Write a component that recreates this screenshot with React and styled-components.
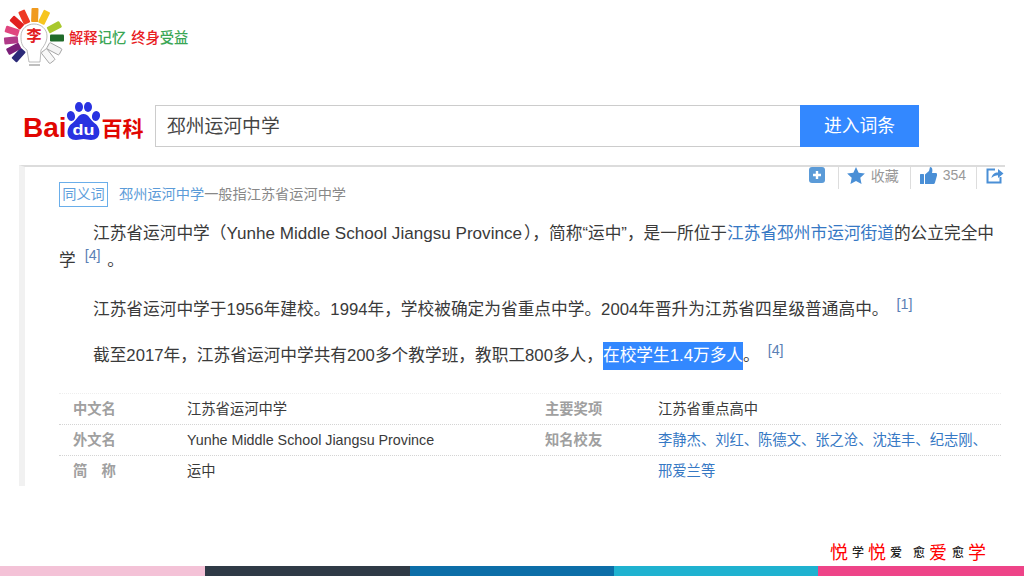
import React from "react";
import styled, { createGlobalStyle } from "styled-components";

const Global = createGlobalStyle`
  html, body { margin: 0; padding: 0; background: #fff; }
  body { font-family: "Liberation Sans", "Noto Sans CJK SC", sans-serif; }
`;
const Slide = styled.div`
  width: 1024px; height: 576px; display: flex; flex-direction: column; overflow: hidden; background: #fff;
`;
const Header = styled.header`
  height: 75px; padding: 4px 0 0 2px; box-sizing: border-box; display: flex; align-items: flex-start; gap: 1px; flex: none;
`;
const Motto = styled.div`
  margin-top: 24px; font-size: 14.3px; line-height: 20px; font-weight: 500; white-space: nowrap; word-spacing: 1px;
`;
const Tint = styled.span`
  color: ${p => p.$c};
`;
const SearchRow = styled.div`
  margin-top: 30px; height: 42px; display: flex; align-items: center; padding-left: 23px; flex: none;
`;
const Brand = styled.div`
  width: 132px; height: 42px; display: flex; align-items: flex-end; flex: none; color: #e10601;
`;
const BrandLatin = styled.span`
  font-size: 28px; font-weight: 700; line-height: 30px; margin-bottom: 4px;
`;
const Paw = styled.svg`
  width: 37px; height: 38px; margin-left: -2px; margin-bottom: 7px; flex: none;
`;
const BrandCjk = styled.span`
  font-size: 21px; font-weight: 700; line-height: 28px; margin-bottom: 4px;
`;
const SearchBox = styled.div`
  width: 645px; height: 42px; box-sizing: border-box; border: 1px solid #ccc; border-right: 0;
  font-size: 18.8px; color: #444; padding: 1px 0 0 11px; line-height: 40px; flex: none;
`;
const SearchButton = styled.button`
  width: 119px; height: 42px; border: 0; background: #3388ff; color: #fff; font: inherit; font-size: 17.8px; padding: 0 0 4px; flex: none;
`;
const Panel = styled.section`
  margin: 18px 0 0 19px; width: 986px; height: 321px; box-sizing: border-box; flex: none;
  border-top: 2px solid #dcdcdc; border-left: 6px solid #f1f1f1; padding-left: 34px; overflow: hidden;
`;
const TopRow = styled.div`
  display: flex; justify-content: space-between; align-items: flex-start; height: 44px;
`;
const Synonym = styled.div`
  margin-top: 15px; display: flex; align-items: center; font-size: 14.2px; line-height: 25px; color: #888;
`;
const SynBadge = styled.span`
  width: 49px; height: 25px; box-sizing: border-box; border: 1px solid #6aaeea; color: #5f9fdc; text-align: center; line-height: 23px; margin-right: 11px;
`;
const SynLink = styled.span`
  color: #5b9bd8;
`;
const Tools = styled.div`
  display: flex; align-items: center; height: 22px; color: #999; font-size: 14px;
`;
const ToolItem = styled.div`
  display: flex; align-items: center; gap: 6px; height: 22px; padding: 0 ${p => p.$r || 11}px 6px ${p => p.$l || 8}px; box-sizing: border-box;
  border-right: ${p => (p.$last ? "0" : "1px solid #ddd")};
`;
const Paragraph = styled.p`
  margin: ${p => p.$top}px 0 0; font-size: 16.7px; line-height: 27px; color: #3a3a3a; text-indent: 34px; white-space: nowrap;
`;
const Latin = styled.span`
  font-size: 17.1px; margin-right: 2px;
`;
const Ref = styled.sup`
  font-size: 14.3px; line-height: 0; color: #5b7fb5; vertical-align: 6px; margin: 0 ${p => p.$r}px 0 ${p => p.$l}px;
`;
const Link = styled.span`
  color: #3678c4;
`;
const Selected = styled.span`
  display: inline-block; background: #3388ff; color: #fff; text-indent: 0; line-height: 28px; height: 28px; width: 140px;
`;
const Table = styled.div`
  margin-top: 23px; border-top: 1px dotted #eee; font-size: 14.3px; width: 942px;
`;
const Row = styled.div`
  display: grid; grid-template-columns: 128px 358px 113px 1fr; height: 31px; line-height: 30px; white-space: nowrap;
  border-bottom: ${p => (p.$last ? "0" : "1px dotted #d4d4d4")}; box-sizing: border-box;
`;
const Label = styled.div`
  color: #a0a0a0; font-weight: 700; padding-left: ${p => p.$l || 0}px;
`;
const Value = styled.div`
  color: ${p => (p.$link ? "#3678c4" : "#3a3a3a")};
`;
const TagRow = styled.div`
  flex: 1; display: flex; justify-content: flex-end; align-items: flex-end; padding-right: 38px; line-height: 26px;
`;
const TagBig = styled.span`
  color: #f00; font-size: 18px; margin-right: ${p => p.$r ?? 4}px;
`;
const TagSmall = styled.span`
  color: #222; font-size: 12px; font-weight: 500; margin-right: ${p => p.$r ?? 4}px;
`;
const ColorBar = styled.div`
  height: 10px; display: grid; grid-template-columns: 205px 205px 204px 204px 206px; flex: none;
`;
const Swatch = styled.div`
  background: ${p => p.$c};
`;

const rays = [
  ["#2b2a78", 222], ["#7a1f78", 242], ["#b03a88", 264], ["#e0457f", 288], ["#e2201f", 312], ["#ee3a24", 335],
  ["#f09a1e", 2], ["#f6c51e", 26], ["#a8c82c", 62], ["#1f6b2a", 90], ["#f4f4f4", 118], ["#f8f8f8", 142],
];

const Logo = () => (
  <svg width="66" height="66" viewBox="0 0 66 66" aria-hidden="true">
    {rays.map(([c, a], i) => (
      <rect key={i} x="28.5" y="4" width="7" height="14" rx="1" fill={c} stroke={c === "#f4f4f4" || c === "#f8f8f8" ? "#999" : "none"}
        strokeWidth="0.8" transform={`rotate(${a} 32 34)`} />
    ))}
    <path d="M25 46 C19 42 19 37 19 32 C19 25 25 20 32 20 C39 20 45 25 45 32 C45 38 42 42 39 46 L38 58 L27 58 Z" fill="#fff" stroke="#aaa" strokeWidth="0.8" />
    <path d="M27 61 H38" stroke="#aaa" strokeWidth="1.5" />
    <text x="32" y="37" textAnchor="middle" fontSize="15" fontWeight="700" fill="#e2201f" fontFamily="Noto Sans CJK SC, sans-serif">李</text>
  </svg>
);

const PlusIcon = () => (
  <svg width="16" height="16" viewBox="0 0 16 16" aria-hidden="true">
    <rect width="16" height="16" rx="3" fill="#5b9bd8" />
    <path d="M8 4v8M4 8h8" stroke="#fff" strokeWidth="2.4" />
  </svg>
);
const StarIcon = () => (
  <svg width="18" height="17" viewBox="0 0 24 23" aria-hidden="true">
    <path d="M12 0l3.6 7.8 8.4 1-6.2 5.8 1.7 8.4L12 18.8 4.5 23l1.7-8.4L0 8.8l8.4-1z" fill="#4a8fd6" />
  </svg>
);
const ThumbIcon = () => (
  <svg width="17" height="17" viewBox="0 0 17 17" aria-hidden="true">
    <rect x="0" y="7" width="4" height="10" rx="0.5" fill="#4a8fd6" />
    <path d="M5 7.5 L9 4 L10 0 C12 0 13 2 12 6 H16 C17 6 17.3 7.5 17 8.5 L15 15.5 C14.7 16.5 14 17 13 17 H5 Z" fill="#4a8fd6" />
  </svg>
);
const ShareIcon = () => (
  <svg width="18" height="17" viewBox="0 0 18 17" fill="none" aria-hidden="true">
    <path d="M9 2.5H1.5V15.5H14.5V10" stroke="#4a8fd6" strokeWidth="2" />
    <path d="M5.5 11C6 7.5 8.5 5.5 12 5.5V2L17.5 6.5 12 11V8.2C9.5 8.2 7.5 9 5.5 11Z" fill="#4a8fd6" />
  </svg>
);

export default function App() {
  return (
    <Slide>
      <Global />
      <Header>
        <Logo />
        <Motto>
          <Tint $c="#e8201f">解释</Tint><Tint $c="#3aa655">记忆</Tint>{" "}
          <Tint $c="#e8201f">终身</Tint><Tint $c="#3aa655">受益</Tint>
        </Motto>
      </Header>
      <SearchRow>
        <Brand>
          <BrandLatin>Bai</BrandLatin>
          <Paw viewBox="0 0 37 38" aria-hidden="true">
            <ellipse cx="6" cy="14" rx="4" ry="5" fill="#2932e1" transform="rotate(-15 6 14)" />
            <ellipse cx="14" cy="5" rx="4" ry="5" fill="#2932e1" />
            <ellipse cx="23" cy="5" rx="4" ry="5" fill="#2932e1" />
            <ellipse cx="31" cy="14" rx="4" ry="5" fill="#2932e1" transform="rotate(15 31 14)" />
            <path d="M18.5 12C13 12 12 18 7 21.5 C1 25.5 0 38 11 38 C14 38 16 37 18.5 37 C21 37 23 38 26 38 C37 38 36 25.5 30 21.5 C25 18 24 12 18.5 12Z" fill="#2932e1" />
            <text x="18.5" y="33" textAnchor="middle" fontSize="15" fontWeight="700" fill="#fff" textLength="22" lengthAdjust="spacingAndGlyphs" fontFamily="Liberation Sans, sans-serif">du</text>
          </Paw>
          <BrandCjk>百科</BrandCjk>
        </Brand>
        <SearchBox>邳州运河中学</SearchBox>
        <SearchButton>进入词条</SearchButton>
      </SearchRow>
      <Panel>
        <TopRow>
          <Synonym>
            <SynBadge>同义词</SynBadge>
            <SynLink>邳州运河中学</SynLink>一般指江苏省运河中学
          </Synonym>
          <Tools>
            <ToolItem $l={1} $r={13}><PlusIcon /></ToolItem>
            <ToolItem><StarIcon />收藏</ToolItem>
            <ToolItem $l={9} $r={10}><ThumbIcon />354</ToolItem>
            <ToolItem $last $l={9} $r={1}><ShareIcon /></ToolItem>
          </Tools>
        </TopRow>
        <Paragraph $top={9}>
          江苏省运河中学（<Latin>Yunhe Middle School Jiangsu Province</Latin>），简称“运中”，是一所位于<Link>江苏省邳州市运河街道</Link>的公立完全中<br />
          学
          <Ref $l={9} $r={2}>[4]</Ref> 。
        </Paragraph>
        <Paragraph $top={22}>
          江苏省运河中学于1956年建校。1994年，学校被确定为省重点中学。2004年晋升为江苏省四星级普通高中。
          <Ref $l={8} $r={0}>[1]</Ref>
        </Paragraph>
        <Paragraph $top={19}>
          截至2017年，江苏省运河中学共有200多个教学班，教职工800多人，<Selected>在校学生1.4万多人</Selected>。
          <Ref $l={8} $r={0}>[4]</Ref>
        </Paragraph>
        <Table>
          <Row>
            <Label $l={14}>中文名</Label><Value>江苏省运河中学</Value>
            <Label>主要奖项</Label><Value>江苏省重点高中</Value>
          </Row>
          <Row>
            <Label $l={14}>外文名</Label><Value>Yunhe Middle School Jiangsu Province</Value>
            <Label>知名校友</Label><Value $link>李静杰、刘红、陈德文、张之沧、沈连丰、纪志刚、</Value>
          </Row>
          <Row $last>
            <Label $l={14}>简　称</Label><Value>运中</Value>
            <Label /><Value $link>邢爱兰等</Value>
          </Row>
        </Table>
      </Panel>
      <TagRow>
        <TagBig>悦</TagBig><TagSmall>学</TagSmall><TagBig>悦</TagBig><TagSmall $r={11}>爱</TagSmall>
        <TagSmall>愈</TagSmall><TagBig $r={5}>爱</TagBig><TagSmall>愈</TagSmall><TagBig $r={0}>学</TagBig>
      </TagRow>
      <ColorBar>
        <Swatch $c="#f4c2d7" /><Swatch $c="#2f3a46" /><Swatch $c="#0d6ea8" /><Swatch $c="#1fb2d0" /><Swatch $c="#ee4488" />
      </ColorBar>
    </Slide>
  );
}
